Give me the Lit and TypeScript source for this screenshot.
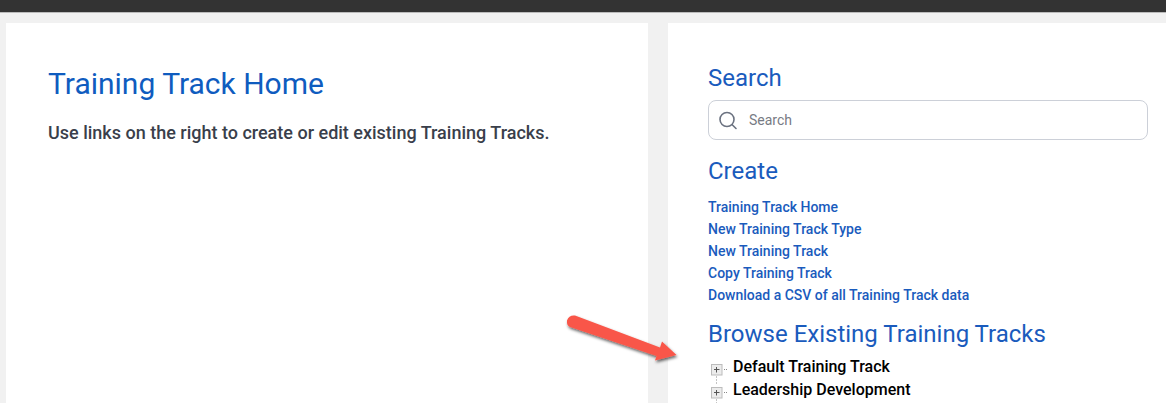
import { LitElement, html, css, svg } from 'lit';
import { customElement } from 'lit/decorators.js';

const createLinks = [
  'Training Track Home',
  'New Training Track Type',
  'New Training Track',
  'Copy Training Track',
  'Download a CSV of all Training Track data',
];

const tracks = ['Default Training Track', 'Leadership Development'];

const expander = svg`
  <rect x="1.5" y="1.5" width="10.5" height="10.5" fill="#ececec" stroke="#bcbcbc"/>
  <path d="M4 6.5h5.5M6.5 4v5.5" stroke="#555" stroke-width="1"/>
  <path d="M14 6.5h4" stroke="#888" stroke-dasharray="1 1"/>
  <path d="M6.5 13.5v9" stroke="#888" stroke-dasharray="1 2"/>
`;

@customElement('app-root')
export class AppRoot extends LitElement {
  static styles = css`
    :host {
      display: block;
      position: relative;
      width: 1166px;
      height: 403px;
      overflow: hidden;
      background: #f1f1f1;
      font-family: Roboto, 'Liberation Sans', sans-serif;
    }

    .topbar {
      height: 12px;
      background: #333333;
      border-bottom: 1px solid #bbbbbb;
    }

    .columns {
      display: flex;
      gap: 20px;
      padding: 10px 0 0 6px;
      height: 380px;
    }

    .card {
      background: #ffffff;
      box-sizing: border-box;
      height: 100%;
    }

    .main {
      width: 642px;
      padding: 42px 42px 0;
    }

    .side {
      flex: 1;
      padding: 41px 18px 0 40px;
    }

    h1 {
      margin: 0;
      font-size: 30px;
      line-height: 38px;
      font-weight: 400;
      color: #0f5cbf;
    }

    .intro {
      margin: 17px 0 0;
      font-size: 18px;
      line-height: 26px;
      font-weight: 500;
      color: #3a3f4b;
    }

    h2 {
      margin: 0;
      font-size: 24px;
      line-height: 28px;
      font-weight: 400;
      color: #1a5bbd;
    }

    .search {
      display: flex;
      align-items: center;
      gap: 11px;
      height: 40px;
      margin: 8px 0 17px;
      padding-left: 9px;
      box-sizing: border-box;
      border: 1px solid #ccd0d8;
      border-radius: 8px;
      font-size: 14px;
      color: #777b84;
    }

    .links {
      display: flex;
      flex-direction: column;
      margin: 11px 0 14px;
    }

    .links a {
      font-size: 14px;
      line-height: 22px;
      font-weight: 500;
      color: #1a5bbd;
      text-decoration: none;
    }

    .tree {
      margin-top: 7px;
    }

    .tree-row {
      display: flex;
      align-items: flex-start;
      height: 23px;
      font-size: 16px;
      line-height: 23px;
      font-weight: 500;
      color: #000000;
    }

    .tree-row svg {
      flex: none;
      margin: 8px 5px 0 2px;
    }

    .arrow {
      position: absolute;
      left: 560px;
      top: 310px;
    }
  `;

  render() {
    return html`
      <div class="topbar"></div>
      <div class="columns">
        <section class="card main">
          <h1>Training Track Home</h1>
          <p class="intro">Use links on the right to create or edit existing Training Tracks.</p>
        </section>
        <aside class="card side">
          <h2>Search</h2>
          <div class="search">
            <svg width="20" height="20" viewBox="0 0 20 20" fill="none" stroke="#6b7280" stroke-width="1.6">
              <circle cx="9" cy="9.5" r="7"/>
              <path d="M14.2 14.7l3.8 3.8" stroke-linecap="round"/>
            </svg>
            <span>Search</span>
          </div>
          <h2>Create</h2>
          <nav class="links">
            ${createLinks.map((l) => html`<a href="#">${l}</a>`)}
          </nav>
          <h2>Browse Existing Training Tracks</h2>
          <div class="tree">
            ${tracks.map(
              (t) => html`
                <div class="tree-row">
                  <svg width="18" height="22" viewBox="0 0 18 22" fill="none">${expander}</svg>
                  <span>${t}</span>
                </div>
              `,
            )}
          </div>
        </aside>
      </div>
      <svg class="arrow" width="125" height="60" viewBox="0 0 125 60">
        <defs>
          <filter id="s" x="-20%" y="-40%" width="140%" height="180%">
            <feDropShadow dx="1" dy="2" stdDeviation="1.5" flood-color="#000" flood-opacity="0.6"/>
          </filter>
        </defs>
        <path
          d="M15 5.5 L100 37.5 L102 31.5 L116.5 45 L95 50.5 L96.5 46 L10 17 Q6.5 15.5 7 10.5 Q9 4.8 15 5.5 Z"
          fill="#f9574a"
          filter="url(#s)"
        />
      </svg>
    `;
  }
}
